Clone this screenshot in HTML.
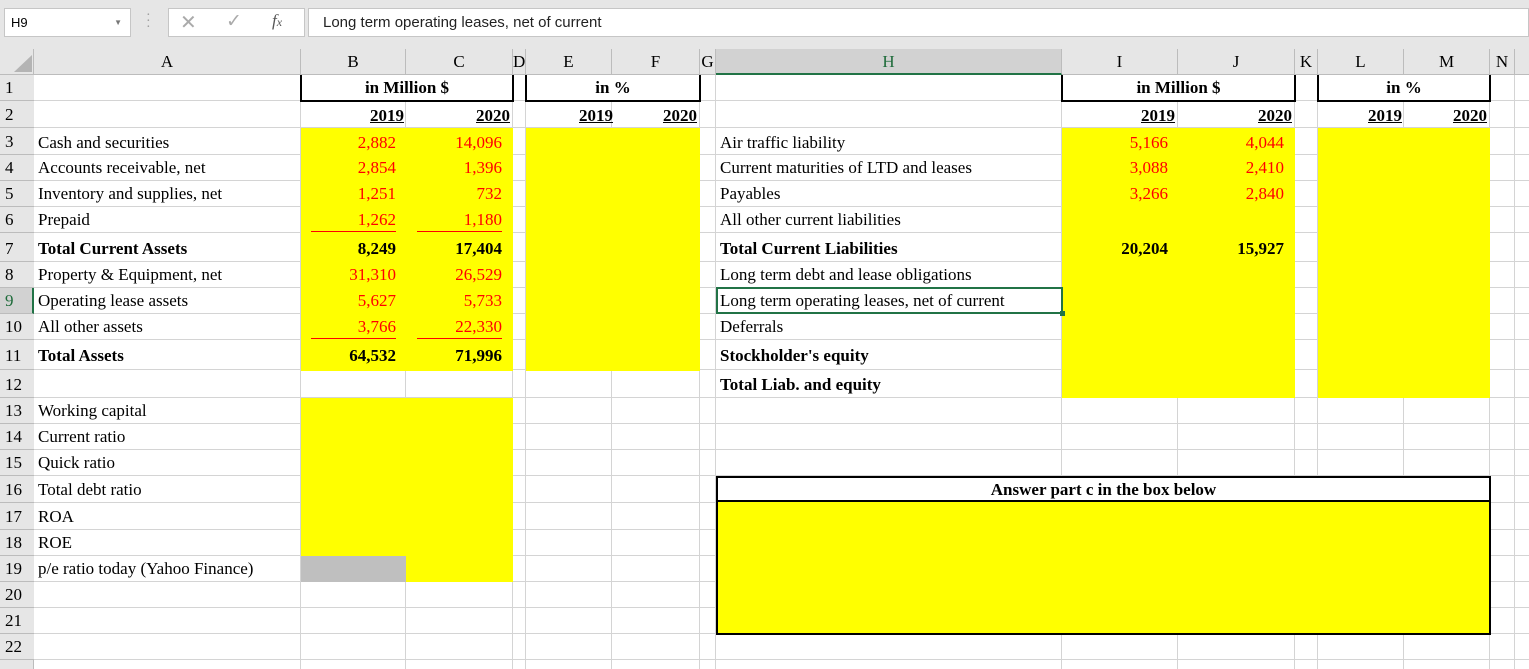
<!DOCTYPE html>
<html><head><meta charset="utf-8"><style>
*{margin:0;padding:0;box-sizing:border-box}
body{width:1529px;height:669px;position:relative;background:#fff;overflow:hidden;font-family:"Liberation Serif",serif;font-size:17px;color:#000}
.a{position:absolute}
.h{position:absolute;height:1px;background:#d4d4d4}
.v{position:absolute;width:1px;background:#d4d4d4}
.y{position:absolute;background:#ffff00}
.t{position:absolute;white-space:nowrap;line-height:20px}
.r{text-align:right}
.red{color:#f00}
.b{font-weight:bold}
.u{text-decoration:underline}
.ch{position:absolute;top:49px;height:26px;line-height:26px;text-align:center;font-size:17px;border-right:1px solid #bcbcbc}
.rh{position:absolute;left:0;width:34px;text-align:left;padding-left:5px;font-size:17px;background:#e6e6e6;border-bottom:1px solid #bcbcbc}
.wb{background:#fff;padding:0 3px}
</style></head><body>
<div class="a" style="left:0;top:0;width:1529px;height:49px;background:#e6e6e6"></div>
<div class="a" style="left:4px;top:8px;width:127px;height:29px;background:#fff;border:1px solid #c6c6c6;font-family:'Liberation Sans',sans-serif;font-size:13px;line-height:27px;padding-left:6px">H9<span style="position:absolute;right:8px;top:0;font-size:8px;color:#777">▼</span></div>
<div class="a" style="left:146px;top:13px;color:#999;font-size:14px;line-height:6px">·<br>·<br>·</div>
<div class="a" style="left:168px;top:8px;width:137px;height:29px;background:#fff;border:1px solid #c6c6c6"></div>
<div class="a" style="left:180px;top:10px;color:#aaa;font-family:'Liberation Sans',sans-serif;font-size:20px">✕</div>
<div class="a" style="left:226px;top:10px;color:#aaa;font-family:'DejaVu Sans',sans-serif;font-size:19px">✓</div>
<div class="a" style="left:272px;top:11px;color:#555;font-style:italic;font-size:17px">f<span style="font-size:12px">x</span></div>
<div class="a" style="left:308px;top:8px;width:1221px;height:29px;background:#fff;border:1px solid #c6c6c6;font-family:'Liberation Sans',sans-serif;font-size:15px;line-height:27px;padding-left:14px;color:#222">Long term operating leases, net of current</div>
<div class="a" style="left:0;top:49px;width:1529px;height:26px;background:#e6e6e6;border-bottom:1px solid #bcbcbc"></div>
<div class="a" style="left:14px;top:55px;width:0;height:0;border-left:18px solid transparent;border-bottom:17px solid #b4b4b4"></div>
<div class="ch" style="left:0;width:34px"></div>
<div class="ch" style="left:34px;width:267px">A</div>
<div class="ch" style="left:301px;width:105px">B</div>
<div class="ch" style="left:406px;width:107px">C</div>
<div class="ch" style="left:513px;width:13px">D</div>
<div class="ch" style="left:526px;width:86px">E</div>
<div class="ch" style="left:612px;width:88px">F</div>
<div class="ch" style="left:700px;width:16px">G</div>
<div class="ch" style="left:716px;width:346px;background:#d2d2d2;color:#1e6b3a;border-bottom:2px solid #217346">H</div>
<div class="ch" style="left:1062px;width:116px">I</div>
<div class="ch" style="left:1178px;width:117px">J</div>
<div class="ch" style="left:1295px;width:23px">K</div>
<div class="ch" style="left:1318px;width:86px">L</div>
<div class="ch" style="left:1404px;width:86px">M</div>
<div class="ch" style="left:1490px;width:25px">N</div>
<div class="a" style="left:0;top:75px;width:34px;height:594px;background:#e6e6e6;border-right:1px solid #bcbcbc"></div>
<div class="rh" style="top:75px;height:26px;line-height:26px">1</div>
<div class="rh" style="top:101px;height:27px;line-height:27px">2</div>
<div class="rh" style="top:128px;height:27px;line-height:27px">3</div>
<div class="rh" style="top:155px;height:26px;line-height:26px">4</div>
<div class="rh" style="top:181px;height:26px;line-height:26px">5</div>
<div class="rh" style="top:207px;height:26px;line-height:26px">6</div>
<div class="rh" style="top:233px;height:29px;line-height:31px">7</div>
<div class="rh" style="top:262px;height:26px;line-height:26px">8</div>
<div class="rh" style="top:288px;height:26px;line-height:26px;background:#d2d2d2;color:#1e6b3a;border-right:2px solid #217346">9</div>
<div class="rh" style="top:314px;height:26px;line-height:26px">10</div>
<div class="rh" style="top:340px;height:30px;line-height:32px">11</div>
<div class="rh" style="top:370px;height:28px;line-height:30px">12</div>
<div class="rh" style="top:398px;height:26px;line-height:26px">13</div>
<div class="rh" style="top:424px;height:26px;line-height:26px">14</div>
<div class="rh" style="top:450px;height:26px;line-height:26px">15</div>
<div class="rh" style="top:476px;height:27px;line-height:28px">16</div>
<div class="rh" style="top:503px;height:27px;line-height:28px">17</div>
<div class="rh" style="top:530px;height:26px;line-height:26px">18</div>
<div class="rh" style="top:556px;height:26px;line-height:26px">19</div>
<div class="rh" style="top:582px;height:26px;line-height:26px">20</div>
<div class="rh" style="top:608px;height:26px;line-height:26px">21</div>
<div class="rh" style="top:634px;height:26px;line-height:26px">22</div>
<div class="h" style="left:34px;width:1495px;top:100px"></div>
<div class="h" style="left:34px;width:1495px;top:127px"></div>
<div class="h" style="left:34px;width:1495px;top:154px"></div>
<div class="h" style="left:34px;width:1495px;top:180px"></div>
<div class="h" style="left:34px;width:1495px;top:206px"></div>
<div class="h" style="left:34px;width:1495px;top:232px"></div>
<div class="h" style="left:34px;width:1495px;top:261px"></div>
<div class="h" style="left:34px;width:1495px;top:287px"></div>
<div class="h" style="left:34px;width:1495px;top:313px"></div>
<div class="h" style="left:34px;width:1495px;top:339px"></div>
<div class="h" style="left:34px;width:1495px;top:369px"></div>
<div class="h" style="left:34px;width:1495px;top:397px"></div>
<div class="h" style="left:34px;width:1495px;top:423px"></div>
<div class="h" style="left:34px;width:1495px;top:449px"></div>
<div class="h" style="left:34px;width:1495px;top:475px"></div>
<div class="h" style="left:34px;width:1495px;top:502px"></div>
<div class="h" style="left:34px;width:1495px;top:529px"></div>
<div class="h" style="left:34px;width:1495px;top:555px"></div>
<div class="h" style="left:34px;width:1495px;top:581px"></div>
<div class="h" style="left:34px;width:1495px;top:607px"></div>
<div class="h" style="left:34px;width:1495px;top:633px"></div>
<div class="h" style="left:34px;width:1495px;top:659px"></div>
<div class="v" style="top:75px;height:594px;left:300px"></div>
<div class="v" style="top:75px;height:594px;left:405px"></div>
<div class="v" style="top:75px;height:594px;left:512px"></div>
<div class="v" style="top:75px;height:594px;left:525px"></div>
<div class="v" style="top:75px;height:594px;left:611px"></div>
<div class="v" style="top:75px;height:594px;left:699px"></div>
<div class="v" style="top:75px;height:594px;left:715px"></div>
<div class="v" style="top:75px;height:594px;left:1061px"></div>
<div class="v" style="top:75px;height:594px;left:1177px"></div>
<div class="v" style="top:75px;height:594px;left:1294px"></div>
<div class="v" style="top:75px;height:594px;left:1317px"></div>
<div class="v" style="top:75px;height:594px;left:1403px"></div>
<div class="v" style="top:75px;height:594px;left:1489px"></div>
<div class="v" style="top:75px;height:594px;left:1514px"></div>
<div class="a" style="left:301px;top:75px;width:212px;height:26px;background:#fff"></div>
<div class="a" style="left:526px;top:75px;width:174px;height:26px;background:#fff"></div>
<div class="a" style="left:1062px;top:75px;width:233px;height:26px;background:#fff"></div>
<div class="a" style="left:1318px;top:75px;width:172px;height:26px;background:#fff"></div>
<div class="y" style="left:301px;top:128px;width:212px;height:243px"></div>
<div class="y" style="left:526px;top:128px;width:174px;height:243px"></div>
<div class="y" style="left:1062px;top:128px;width:233px;height:270px"></div>
<div class="y" style="left:1318px;top:128px;width:172px;height:270px"></div>
<div class="y" style="left:301px;top:398px;width:212px;height:184px"></div>
<div class="a" style="left:301px;top:556px;width:105px;height:26px;background:#bfbfbf"></div>
<div class="a" style="left:300px;top:75px;width:214px;height:27px;border:2px solid #000;border-top:none"></div>
<div class="a" style="left:525px;top:75px;width:176px;height:27px;border:2px solid #000;border-top:none"></div>
<div class="a" style="left:1061px;top:75px;width:235px;height:27px;border:2px solid #000;border-top:none"></div>
<div class="a" style="left:1317px;top:75px;width:174px;height:27px;border:2px solid #000;border-top:none"></div>
<div class="t b" style="left:301px;width:212px;top:78px;text-align:center">in Million $</div>
<div class="t b" style="left:526px;width:174px;top:78px;text-align:center">in&nbsp;%</div>
<div class="t b" style="left:1062px;width:233px;top:78px;text-align:center">in Million $</div>
<div class="t b" style="left:1318px;width:172px;top:78px;text-align:center">in&nbsp;%</div>
<div class="t b u r" style="left:301px;width:103px;top:106px">2019</div>
<div class="t b u r" style="left:406px;width:104px;top:106px">2020</div>
<div class="t b u r" style="left:526px;width:87px;top:106px">2019</div>
<div class="t b u r" style="left:612px;width:85px;top:106px">2020</div>
<div class="t b u r" style="left:1062px;width:113px;top:106px">2019</div>
<div class="t b u r" style="left:1178px;width:114px;top:106px">2020</div>
<div class="t b u r" style="left:1318px;width:84px;top:106px">2019</div>
<div class="t b u r" style="left:1404px;width:83px;top:106px">2020</div>
<div class="t" style="left:38px;top:133px">Cash and securities</div>
<div class="t" style="left:38px;top:158px">Accounts receivable, net</div>
<div class="t" style="left:38px;top:184px">Inventory and supplies, net</div>
<div class="t" style="left:38px;top:210px">Prepaid</div>
<div class="t b" style="left:38px;top:239px">Total Current Assets</div>
<div class="t" style="left:38px;top:265px">Property &amp; Equipment, net</div>
<div class="t" style="left:38px;top:291px">Operating lease assets</div>
<div class="t" style="left:38px;top:317px">All other assets</div>
<div class="t b" style="left:38px;top:346px">Total Assets</div>
<div class="t" style="left:38px;top:401px">Working capital</div>
<div class="t" style="left:38px;top:427px">Current ratio</div>
<div class="t" style="left:38px;top:453px">Quick ratio</div>
<div class="t" style="left:38px;top:480px">Total debt ratio</div>
<div class="t" style="left:38px;top:507px">ROA</div>
<div class="t" style="left:38px;top:533px">ROE</div>
<div class="t" style="left:38px;top:559px">p/e ratio today (Yahoo Finance)</div>
<div class="t r red" style="left:301px;width:95px;top:133px">2,882</div>
<div class="t r red" style="left:406px;width:96px;top:133px">14,096</div>
<div class="t r red" style="left:301px;width:95px;top:158px">2,854</div>
<div class="t r red" style="left:406px;width:96px;top:158px">1,396</div>
<div class="t r red" style="left:301px;width:95px;top:184px">1,251</div>
<div class="t r red" style="left:406px;width:96px;top:184px">732</div>
<div class="t r red" style="left:301px;width:95px;top:210px">1,262</div>
<div class="t r red" style="left:406px;width:96px;top:210px">1,180</div>
<div class="a" style="left:311px;top:231px;width:85px;height:1px;background:#f00"></div>
<div class="a" style="left:417px;top:231px;width:85px;height:1px;background:#f00"></div>
<div class="t r b" style="left:301px;width:95px;top:239px">8,249</div>
<div class="t r b" style="left:406px;width:96px;top:239px">17,404</div>
<div class="t r red" style="left:301px;width:95px;top:265px">31,310</div>
<div class="t r red" style="left:406px;width:96px;top:265px">26,529</div>
<div class="t r red" style="left:301px;width:95px;top:291px">5,627</div>
<div class="t r red" style="left:406px;width:96px;top:291px">5,733</div>
<div class="t r red" style="left:301px;width:95px;top:317px">3,766</div>
<div class="t r red" style="left:406px;width:96px;top:317px">22,330</div>
<div class="a" style="left:311px;top:338px;width:85px;height:1px;background:#f00"></div>
<div class="a" style="left:417px;top:338px;width:85px;height:1px;background:#f00"></div>
<div class="t r b" style="left:301px;width:95px;top:346px">64,532</div>
<div class="t r b" style="left:406px;width:96px;top:346px">71,996</div>
<div class="t" style="left:720px;top:133px">Air traffic liability</div>
<div class="t" style="left:720px;top:158px">Current maturities of LTD and leases</div>
<div class="t" style="left:720px;top:184px">Payables</div>
<div class="t" style="left:720px;top:210px">All other current liabilities</div>
<div class="t b" style="left:720px;top:239px">Total Current Liabilities</div>
<div class="t" style="left:720px;top:265px">Long term debt and lease obligations</div>
<div class="a" style="left:716px;top:287px;width:347px;height:27px;border:2px solid #217346"></div>
<div class="a" style="left:1060px;top:311px;width:5px;height:5px;background:#217346"></div>
<div class="t" style="left:720px;top:291px">Long term operating leases, net of current</div>
<div class="t" style="left:720px;top:317px">Deferrals</div>
<div class="t b" style="left:720px;top:346px">Stockholder's equity</div>
<div class="t b" style="left:720px;top:375px">Total Liab. and equity</div>
<div class="t r red" style="left:1062px;width:106px;top:133px">5,166</div>
<div class="t r red" style="left:1178px;width:106px;top:133px">4,044</div>
<div class="t r red" style="left:1062px;width:106px;top:158px">3,088</div>
<div class="t r red" style="left:1178px;width:106px;top:158px">2,410</div>
<div class="t r red" style="left:1062px;width:106px;top:184px">3,266</div>
<div class="t r red" style="left:1178px;width:106px;top:184px">2,840</div>
<div class="t r b" style="left:1062px;width:106px;top:239px">20,204</div>
<div class="t r b" style="left:1178px;width:106px;top:239px">15,927</div>
<div class="a" style="left:716px;top:476px;width:775px;height:159px;border:2px solid #000;background:#ffff00"></div>
<div class="a" style="left:718px;top:478px;width:771px;height:24px;background:#fff;border-bottom:2px solid #000"></div>
<div class="t b" style="left:716px;width:775px;text-align:center;top:480px">Answer part c in the box below</div>
</body></html>
